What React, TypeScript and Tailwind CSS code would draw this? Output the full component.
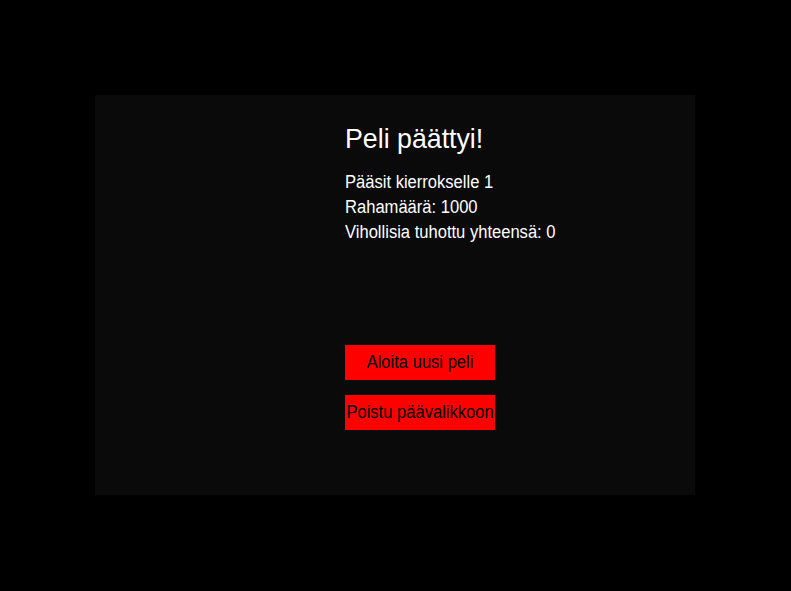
import React from 'react';

const Narrow: React.FC<{ children: React.ReactNode; className?: string }> = ({ children, className = '' }) => (
  <span className={`inline-block whitespace-nowrap ${className}`}>{children}</span>
);

const App: React.FC = () => {
  return (
    <div
      className="h-[591px] w-[791px] bg-black pl-[95px] pt-[95px]"
      style={{ fontFamily: '"Liberation Sans", Arial, sans-serif' }}
    >
      <div className="flex h-[400px] w-[600px] bg-[#0a0a0a]">
        <div className="w-[250px] shrink-0" />
        <div className="flex flex-col pt-[27px] text-white">
          <h1 className="text-[28px] leading-[34px]">
            <Narrow className="origin-left scale-x-[0.955]">Peli päättyi!</Narrow>
          </h1>
          <div className="mt-[14px] text-[18px] leading-[25px]">
            <p>
              <Narrow className="origin-left scale-x-[0.92]">Pääsit kierrokselle 1</Narrow>
            </p>
            <p>
              <Narrow className="origin-left scale-x-[0.92]">Rahamäärä: 1000</Narrow>
            </p>
            <p>
              <Narrow className="origin-left scale-x-[0.92]">Vihollisia tuhottu yhteensä: 0</Narrow>
            </p>
          </div>
          <div className="mt-[100px] flex flex-col gap-[15px]">
            <button className="flex h-[35px] w-[150px] items-center justify-center overflow-visible bg-[#ff0000] text-[18px] leading-[25px] text-black">
              <Narrow className="origin-center scale-x-[0.92]">Aloita uusi peli</Narrow>
            </button>
            <button className="flex h-[35px] w-[150px] items-center justify-center overflow-visible bg-[#ff0000] text-[18px] leading-[25px] text-black">
              <Narrow className="origin-center scale-x-[0.92]">Poistu päävalikkoon</Narrow>
            </button>
          </div>
        </div>
      </div>
    </div>
  );
};

export default App;
